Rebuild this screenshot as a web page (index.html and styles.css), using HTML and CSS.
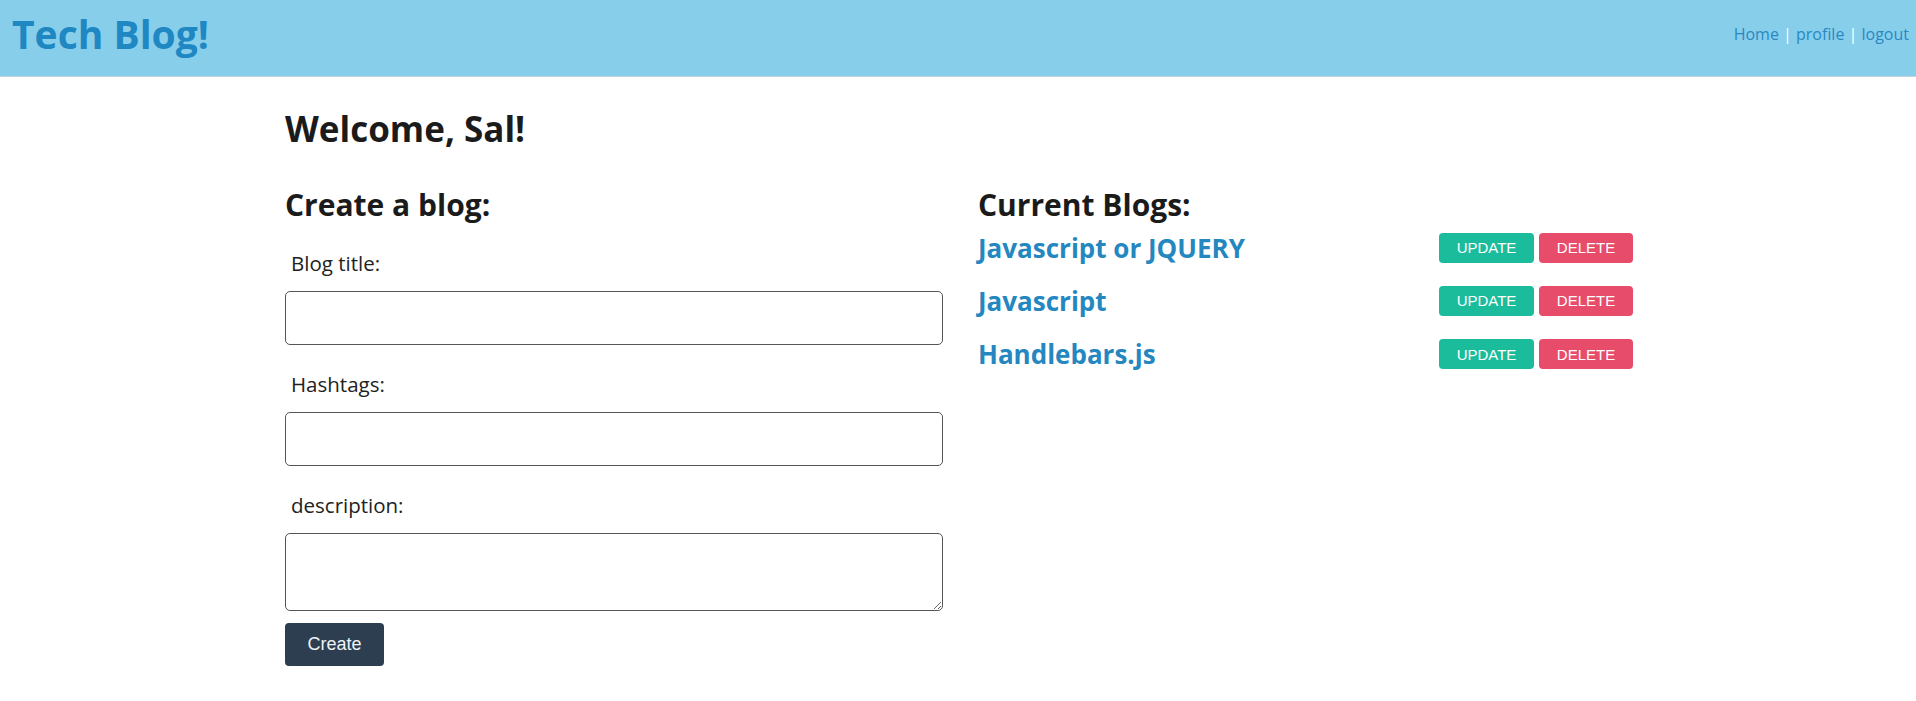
FILE: index.html
```html
<!DOCTYPE html>
<html lang="en">
<head>
<meta charset="utf-8">
<title>Tech Blog!</title>
<link rel="stylesheet" href="styles.css">
</head>
<body>
<header class="topbar">
  <h1 class="brand">Tech Blog!</h1>
  <nav class="nav">
    <a href="#" class="nav-link">Home</a><span class="sep"> | </span><a href="#" class="nav-link">profile</a><span class="sep"> | </span><a href="#" class="nav-link">logout</a>
  </nav>
</header>
<main class="container">
  <h2 class="welcome">Welcome, Sal!</h2>
  <div class="columns">
    <section class="create">
      <h3 class="section-title">Create a blog:</h3>
      <form class="blog-form">
        <label class="field-label" for="title">Blog title:</label>
        <input class="field-input" id="title" type="text">
        <label class="field-label" for="tags">Hashtags:</label>
        <input class="field-input" id="tags" type="text">
        <label class="field-label" for="desc">description:</label>
        <textarea class="field-textarea" id="desc"></textarea>
        <button type="button" class="btn btn-create">Create</button>
      </form>
    </section>
    <section class="current">
      <h3 class="section-title">Current Blogs:</h3>
      <ul class="blog-list">
        <li class="blog-row">
          <a href="#" class="blog-link">Javascript or JQUERY</a>
          <div class="actions"><button class="btn btn-update">UPDATE</button><button class="btn btn-delete">DELETE</button></div>
        </li>
        <li class="blog-row">
          <a href="#" class="blog-link">Javascript</a>
          <div class="actions"><button class="btn btn-update">UPDATE</button><button class="btn btn-delete">DELETE</button></div>
        </li>
        <li class="blog-row">
          <a href="#" class="blog-link">Handlebars.js</a>
          <div class="actions"><button class="btn btn-update">UPDATE</button><button class="btn btn-delete">DELETE</button></div>
        </li>
      </ul>
    </section>
  </div>
</main>
</body>
</html>
```
FILE: styles.css
```css
* { box-sizing: border-box; }
body {
  margin: 0;
  font-family: "Open Sans", "Noto Sans", sans-serif;
  color: #1b1b1b;
  background: #fff;
}
.topbar {
  display: flex;
  justify-content: space-between;
  align-items: center;
  height: 77px;
  padding: 0 7px 0 12px;
  background: #87ceeb;
  border-bottom: 1px solid #c3d3da;
}
.brand {
  margin: 0;
  font-size: 39px;
  font-weight: 700;
  color: #1f87c1;
  line-height: 1;
  position: relative;
  top: -5px;
}
.nav {
  font-size: 16px;
  position: relative;
  top: -4px;
}
.nav-link { color: #2a88c2; text-decoration: none; }
.sep { color: #fff; }
.container {
  width: 1348px;
  margin: 0 0 0 285px;
}
.welcome {
  margin: 30px 0 0;
  font-size: 35px;
  line-height: 44px;
  font-weight: 700;
}
.columns {
  display: grid;
  grid-template-columns: 658px 1fr;
  column-gap: 35px;
  margin-top: 36px;
}
.section-title {
  margin: 0;
  font-size: 30px;
  line-height: 36px;
  font-weight: 700;
}
.blog-form {
  display: flex;
  flex-direction: column;
  align-items: flex-start;
  padding-top: 26px;
}
.field-label {
  font-size: 20.5px;
  line-height: 28px;
  padding-left: 6px;
  margin-bottom: 14px;
  color: #222;
}
.field-input {
  width: 100%;
  height: 54px;
  border: 1px solid #555;
  border-radius: 5px;
  margin-bottom: 25px;
  font: inherit;
}
.field-textarea {
  width: 100%;
  height: 78px;
  border: 1px solid #555;
  border-radius: 5px;
  font: inherit;
  margin-bottom: 12px;
}
.btn {
  border: 0;
  border-radius: 4px;
  color: #fff;
  font-family: "Liberation Sans", Arial, sans-serif;
  cursor: pointer;
}
.btn-create {
  width: 99px;
  height: 43px;
  background: #2c3e50;
  font-size: 18px;
  color: #eef3f8;
}
.blog-list {
  list-style: none;
  margin: -2px 0 0;
  padding: 0;
}
.blog-row {
  display: flex;
  justify-content: space-between;
  align-items: center;
  height: 53.3px;
}
.blog-link {
  color: #2587c0;
  text-decoration: none;
  font-weight: 700;
  font-size: 26px;
}
.actions {
  display: flex;
  gap: 5px;
}
.btn-update, .btn-delete {
  height: 30px;
  font-size: 15px;
  width: 95px;
}
.btn-update { background: #1abc9c; }
.btn-delete { background: #e74c6a; width: 94px; }
```
